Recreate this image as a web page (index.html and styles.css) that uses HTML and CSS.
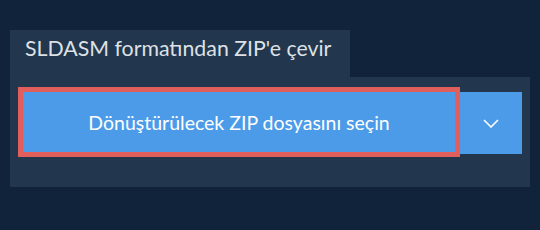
FILE: index.html
```html
<!DOCTYPE html>
<html lang="tr">
<head>
  <meta charset="UTF-8">
  <meta name="viewport" content="width=device-width, initial-scale=1.0">
  <title>SLDASM formatından ZIP'e çevir</title>
  <link rel="stylesheet" href="styles.css">
</head>
<body>
  <div class="converter">
    <div class="tab">SLDASM formatından ZIP'e çevir</div>
    <div class="panel">
      <button class="pick">Dönüştürülecek ZIP dosyasını seçin</button>
      <button class="more" aria-label="Diğer seçenekler">
        <svg width="16" height="9" viewBox="0 0 16 9"><path d="M1 1l7 7 7-7" fill="none" stroke="#fff" stroke-width="1.6"/></svg>
      </button>
    </div>
  </div>
</body>
</html>
```

FILE: styles.css
```css
body {
  font-family: 'Lato', 'Liberation Sans', sans-serif;
  background: #10233a;
  margin: 0;
}
.converter {
  padding: 30px 10px 0 10px;
}
.tab {
  display: inline-block;
  width: 340px;
  height: 47px;
  box-sizing: border-box;
  padding: 6px 0 0 15px;
  background: #22364d;
  color: #dde1e6;
  font-size: 21.3px;
  line-height: 24px;
}
.panel {
  display: flex;
  align-items: flex-start;
  height: 110px;
  box-sizing: border-box;
  padding: 10px 8px 0 8px;
  background: #22364d;
}
button {
  font-family: inherit;
  border: none;
  cursor: pointer;
  color: #fff;
  background: #4b9be8;
}
.pick {
  width: 442px;
  height: 70px;
  border: 5px solid #e05e5b;
  font-size: 19.5px;
}
.more {
  width: 62px;
  height: 62px;
  margin-top: 5px;
  display: flex;
  justify-content: center;
  align-items: center;
  padding: 0;
}
```
